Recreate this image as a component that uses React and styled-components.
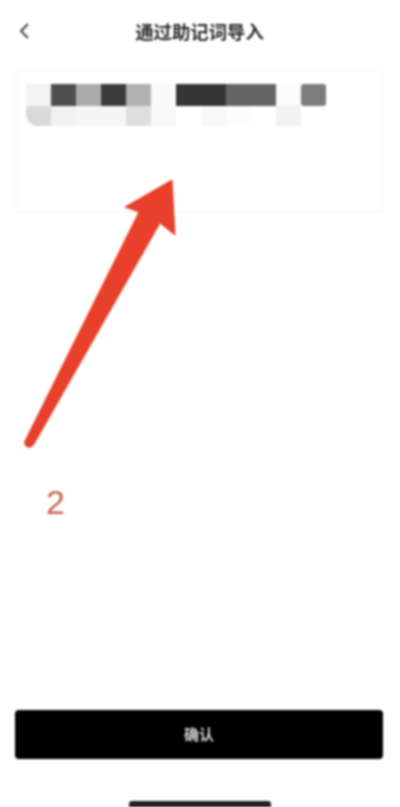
import React from 'react';
import styled, { createGlobalStyle } from 'styled-components';

const GlobalStyle = createGlobalStyle`
  html, body {
    margin: 0;
    padding: 0;
    background: #fff;
  }
`;

const Page = styled.div`
  position: relative;
  display: flex;
  flex-direction: column;
  width: 400px;
  height: 807px;
  overflow: hidden;
  background: #fff;
  font-family: "Noto Sans CJK SC", "Liberation Sans", sans-serif;
  filter: blur(0.8px);
`;

const Header = styled.div`
  position: relative;
  display: flex;
  align-items: center;
  justify-content: center;
  height: 62px;
`;

const BackButton = styled.div`
  position: absolute;
  left: 15px;
  top: 21px;
  display: flex;
  color: #444;
`;

const Title = styled.div`
  font-size: 18.4px;
  font-weight: 700;
  margin-right: 1px;
  color: #2c2c2c;
`;

const InputCard = styled.div`
  box-sizing: border-box;
  height: 142px;
  margin: 8px 17px 0 15px;
  padding: 13px 0 0 10px;
  border: 1px solid #f6f5f4;
  border-radius: 3px;
`;

const Mosaic = styled.div`
  display: grid;
  grid-template-columns: repeat(12, 25px);
  grid-template-rows: 22px 20px;
`;

const Cell = styled.div`
  grid-column: span ${(p) => p.$span || 1};
  background: ${(p) => p.$tone};
  border-radius: ${(p) => (p.$soft ? '3px' : '0')};
  border-bottom-left-radius: ${(p) => (p.$round ? '12px' : undefined)};
`;

const Spacer = styled.div`
  flex: 1;
`;

const ConfirmButton = styled.div`
  display: flex;
  align-items: center;
  justify-content: center;
  height: 49px;
  margin: 0 17px 0 15px;
  padding-bottom: 3px;
  box-sizing: border-box;
  border-radius: 4px;
  background: #000;
  color: #d0d0d0;
  font-size: 15px;
  font-weight: 700;
`;

const HomeBar = styled.div`
  flex: none;
  align-self: center;
  width: 142px;
  height: 6px;
  margin-top: 42px;
  background: #1e1e1e;
  border-radius: 3px 3px 0 0;
`;

const ArrowLayer = styled.svg`
  position: absolute;
  left: 0;
  top: 0;
  pointer-events: none;
`;

const StepNumber = styled.div`
  position: absolute;
  left: 46px;
  top: 482px;
  font-family: "Liberation Sans", sans-serif;
  font-size: 34px;
  line-height: 40px;
  color: #c9624f;
`;

const mosaicCells = [
  { tone: '#f3f3f3' },
  { tone: '#505050' },
  { tone: '#ababab' },
  { tone: '#3c3c3c' },
  { tone: '#b0b0b0' },
  { tone: '#f9f9f9' },
  { tone: '#363636', span: 2 },
  { tone: '#646464', span: 2 },
  { tone: '#fbfbfb' },
  { tone: '#7c7c7c', soft: true },
  { tone: '#d9d9d9', round: true },
  { tone: '#f1f1f1' },
  { tone: '#f5f5f5', span: 2 },
  { tone: '#dedede' },
  { tone: '#f8f8f8' },
  { tone: '#fff' },
  { tone: '#f9f9f9' },
  { tone: '#fcfcfc' },
  { tone: '#fff' },
  { tone: '#f2f2f2' },
];

const App = () => {
  return (
    <Page>
      <GlobalStyle />
      <Header>
        <BackButton>
          <svg width="20" height="20" viewBox="0 0 20 20" fill="none">
            <path d="M13 3 L6 10 L13 17" stroke="currentColor" strokeWidth="2" />
          </svg>
        </BackButton>
        <Title>通过助记词导入</Title>
      </Header>
      <InputCard>
        <Mosaic>
          {mosaicCells.map((c, i) => (
            <Cell key={i} $tone={c.tone} $span={c.span} $round={c.round} $soft={c.soft} />
          ))}
        </Mosaic>
      </InputCard>
      <Spacer />
      <ConfirmButton>确认</ConfirmButton>
      <HomeBar />
      <ArrowLayer width="400" height="807" viewBox="0 0 400 807">
        <path
          d="M172 180 L125 207 L139 212 L25 441 Q24 446 28 447 Q32 448 34 444 L160 223 L175 235 Z"
          fill="#e8402a"
          stroke="#e8402a"
          strokeWidth="1"
          strokeLinejoin="round"
        />
      </ArrowLayer>
      <StepNumber>2</StepNumber>
    </Page>
  );
};

export default App;
